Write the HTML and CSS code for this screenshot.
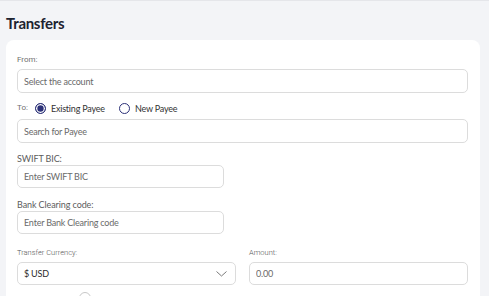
FILE: index.html
```html
<!DOCTYPE html>
<html lang="en">
<head>
<meta charset="utf-8">
<title>Transfers</title>
<link rel="stylesheet" href="styles.css">
</head>
<body>
<div class="page">
  <h1 class="title">Transfers</h1>
  <div class="card">
    <label class="label-sm">From:</label>
    <input class="field" type="text" placeholder="Select the account">

    <div class="to-row">
      <span class="label-sm">To:</span>
      <span class="radio checked"></span>
      <span class="radio-text">Existing Payee</span>
      <span class="radio"></span>
      <span class="radio-text">New Payee</span>
    </div>
    <input class="field" type="text" placeholder="Search for Payee">

    <label class="label-md">SWIFT BIC:</label>
    <input class="field narrow" type="text" placeholder="Enter SWIFT BIC">

    <label class="label-md label-gap">Bank Clearing code:</label>
    <input class="field narrow" type="text" placeholder="Enter Bank Clearing code">

    <div class="two-col">
      <div class="col">
        <label class="label-xs">Transfer Currency:</label>
        <div class="select">
          <span>$ USD</span>
          <svg width="11" height="6" viewBox="0 0 11 6"><path d="M0.5 0.5 L5.5 5 L10.5 0.5" fill="none" stroke="#7a7a7a" stroke-width="1"/></svg>
        </div>
      </div>
      <div class="col">
        <label class="label-xs">Amount:</label>
        <input class="field" type="text" placeholder="0.00">
      </div>
    </div>

    <div class="bottom-row">
      <span class="dot"></span>
    </div>
  </div>
</div>
</body>
</html>
```

FILE: styles.css
```css
html, body {
  margin: 0;
  padding: 0;
}
body {
  background: #f3f4f7;
  border-top: 1px solid #e5e6ea;
  font-family: "Lato", "Open Sans", sans-serif;
  color: #333;
  height: 295px;
  overflow: hidden;
}
.page {
  padding: 0 9px 0 6px;
}
.title {
  margin: 0 0 7px 0;
  padding-top: 12px;
  height: 20px;
  line-height: 20px;
  font-size: 15px;
  letter-spacing: -0.3px;
  font-weight: 700;
  color: #1d2330;
}
.card {
  background: #fff;
  border-radius: 8px 8px 0 0;
  padding: 14px 12px 0 11px;
  height: 300px;
  box-sizing: border-box;
}
.label-sm, .label-xs {
  display: block;
  font-family: "Roboto", sans-serif;
  font-size: 8px;
  line-height: 12px;
  color: #6f6f6f;
  margin-bottom: 3px;
}
.label-xs {
  font-size: 7.5px;
  font-weight: 300;
  color: #555;
}
.label-md {
  display: block;
  font-size: 9px;
  letter-spacing: -0.1px;
  line-height: 12px;
  color: #5c5c5c;
  margin-top: 10px;
}
.label-gap {
  margin-top: 11px;
}
.field {
  display: block;
  box-sizing: border-box;
  width: 100%;
  height: 24px;
  border: 1px solid #dcdcdc;
  border-radius: 5px;
  padding: 0 6px;
  margin: 0;
  font-family: "Lato", sans-serif;
  font-size: 9px;
  letter-spacing: -0.2px;
  color: #444;
  background: #fff;
  outline: none;
}
.field::placeholder {
  color: #6a6a6a;
  opacity: 1;
}
.narrow {
  width: 207px;
  height: 23px;
}
.to-row {
  display: flex;
  align-items: center;
  height: 14px;
  margin: 8px 0 4px 0;
}
.to-row .label-sm {
  margin: 0 7px 0 0;
}
.radio {
  box-sizing: border-box;
  width: 11px;
  height: 11px;
  border: 1.3px solid #2c3178;
  border-radius: 50%;
  margin-right: 5px;
  flex: none;
}
.radio.checked {
  background: #2c3178;
  box-shadow: inset 0 0 0 1.3px #fff;
}
.radio-text {
  font-size: 9px;
  letter-spacing: -0.2px;
  color: #333;
  margin-right: 14px;
}
.two-col {
  display: grid;
  grid-template-columns: 1fr 1fr;
  column-gap: 13px;
  margin-top: 13px;
}
.select {
  box-sizing: border-box;
  height: 23px;
  border: 1px solid #dcdcdc;
  border-radius: 5px;
  padding: 0 8px 0 6px;
  display: flex;
  align-items: center;
  justify-content: space-between;
  font-size: 9px;
  letter-spacing: -0.2px;
  color: #2b2b2b;
}
.two-col .field {
  height: 23px;
}
.bottom-row {
  display: flex;
  padding-left: 62px;
  margin-top: 7px;
}
.dot {
  width: 10px;
  height: 10px;
  border: 1px solid #c8c8c8;
  border-radius: 50%;
}
```
